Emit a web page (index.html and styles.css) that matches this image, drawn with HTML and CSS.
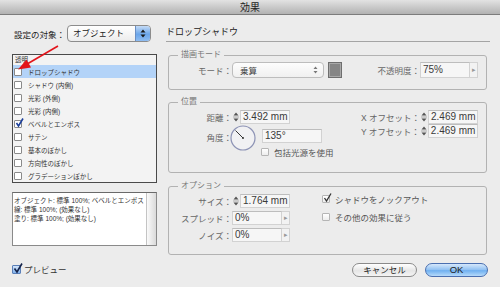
FILE: index.html
```html
<!DOCTYPE html>
<html lang="ja">
<head>
  <meta charset="UTF-8" />
  <title>効果</title>
  <link rel="stylesheet" href="styles.css">
</head>
<body>
  <div class="titlebar">効果</div>

  <div class="dialog">
    <div class="left">
      <div class="target-row">
        <span class="target-label">設定の対象：</span>
        <div class="popup">
          <span class="popup-text">オブジェクト</span>
          <span class="popup-cap">
            <svg width="6" height="9" viewBox="0 0 6 9"><path d="M0.5 3.5 L3 0.5 L5.5 3.5Z M0.5 5.5 L3 8.5 L5.5 5.5Z" fill="#1a1a1a"/></svg>
          </span>
        </div>
      </div>

      <div class="effect-list">
        <div class="list-head">透明</div>
        <div class="list-row selected"><span class="cb"></span>ドロップシャドウ</div>
        <div class="list-row"><span class="cb"></span>シャドウ (内側)</div>
        <div class="list-row"><span class="cb"></span>光彩 (外側)</div>
        <div class="list-row"><span class="cb"></span>光彩 (内側)</div>
        <div class="list-row"><span class="cb checked">
          <svg width="9" height="10" viewBox="0 0 9 10"><path d="M1.5 5 L3.5 8 L8 0.5" fill="none" stroke="#1c3f9a" stroke-width="1.6"/></svg>
        </span>ベベルとエンボス</div>
        <div class="list-row"><span class="cb"></span>サテン</div>
        <div class="list-row"><span class="cb"></span>基本のぼかし</div>
        <div class="list-row"><span class="cb"></span>方向性のぼかし</div>
        <div class="list-row"><span class="cb"></span>グラデーションぼかし</div>
      </div>

      <div class="summary">
        <div class="summary-text">
          <div>オブジェクト: 標準 100%; ベベルとエンボス</div>
          <div>線: 標準 100%; (効果なし)</div>
          <div>塗り: 標準 100%; (効果なし)</div>
        </div>
        <div class="scrollbar"></div>
      </div>

      <div class="preview">
        <span class="cb blue">
          <svg width="10" height="11" viewBox="0 0 10 11"><path d="M1.5 5.5 L4 9 L9 0.5" fill="none" stroke="#14234a" stroke-width="1.6"/></svg>
        </span>
        プレビュー
      </div>
    </div>

    <div class="right">
      <div class="section-title">ドロップシャドウ</div>

      <fieldset class="group group-mode">
        <legend>描画モード</legend>
        <div class="row">
          <span class="label">モード：</span>
          <div class="select">
            <span>乗算</span>
            <svg width="5" height="8" viewBox="0 0 5 8"><path d="M0.5 3 L2.5 0.5 L4.5 3Z M0.5 5 L2.5 7.5 L4.5 5Z" fill="#777"/></svg>
          </div>
          <span class="swatch"></span>
          <span class="label right-label">不透明度：</span>
          <span class="field">75%</span>
          <span class="field-arrow">▸</span>
        </div>
      </fieldset>

      <fieldset class="group group-pos">
        <legend>位置</legend>
        <div class="cols">
          <div class="col">
            <div class="row">
              <span class="label">距離：</span>
              <svg class="spin" width="8" height="14" viewBox="0 0 8 14"><path d="M1.5 5.5 L4 2.5 L6.5 5.5Z M1.5 8.5 L4 11.5 L6.5 8.5Z" fill="#555"/><path d="M1 7H7" stroke="#aaa"/></svg>
              <span class="field">3.492 mm</span>
            </div>
            <div class="angle-row">
              <span class="label angle-label">角度：</span>
              <svg class="dial" width="26" height="26" viewBox="0 0 26 26">
                <circle cx="13" cy="13" r="12" fill="#f1f1f3" stroke="#8d93b5" stroke-width="1.2"/>
                <path d="M13 13 L5.5 5.5" stroke="#333" stroke-width="1"/>
                <circle cx="13" cy="13" r="1" fill="#333"/>
              </svg>
              <div class="angle-side">
                <span class="field wide">135°</span>
                <div class="check-row">
                  <span class="cb plain"></span>
                  包括光源を使用
                </div>
              </div>
            </div>
          </div>
          <div class="col col-right">
            <div class="row">
              <span class="label">X オフセット：</span>
              <svg class="spin" width="8" height="14" viewBox="0 0 8 14"><path d="M1.5 5.5 L4 2.5 L6.5 5.5Z M1.5 8.5 L4 11.5 L6.5 8.5Z" fill="#555"/><path d="M1 7H7" stroke="#aaa"/></svg>
              <span class="field">2.469 mm</span>
            </div>
            <div class="row">
              <span class="label">Y オフセット：</span>
              <svg class="spin" width="8" height="14" viewBox="0 0 8 14"><path d="M1.5 5.5 L4 2.5 L6.5 5.5Z M1.5 8.5 L4 11.5 L6.5 8.5Z" fill="#555"/><path d="M1 7H7" stroke="#aaa"/></svg>
              <span class="field">2.469 mm</span>
            </div>
          </div>
        </div>
      </fieldset>

      <fieldset class="group group-opt">
        <legend>オプション</legend>
        <div class="cols">
          <div class="col stacked">
            <div class="row">
              <span class="label">サイズ：</span>
              <svg class="spin" width="8" height="14" viewBox="0 0 8 14"><path d="M1.5 5.5 L4 2.5 L6.5 5.5Z M1.5 8.5 L4 11.5 L6.5 8.5Z" fill="#555"/><path d="M1 7H7" stroke="#aaa"/></svg>
              <span class="field">1.764 mm</span>
            </div>
            <div class="row">
              <span class="label">スプレッド：</span>
              <span class="field">0%</span>
              <span class="field-arrow">▸</span>
            </div>
            <div class="row">
              <span class="label">ノイズ：</span>
              <span class="field">0%</span>
              <span class="field-arrow">▸</span>
            </div>
          </div>
          <div class="col checks">
            <div class="check-row">
              <span class="cb plain">
                <svg width="9" height="10" viewBox="0 0 9 10"><path d="M1.5 5 L3.5 8 L8 0.5" fill="none" stroke="#333" stroke-width="1.3"/></svg>
              </span>
              シャドウをノックアウト
            </div>
            <div class="check-row">
              <span class="cb plain"></span>
              その他の効果に従う
            </div>
          </div>
        </div>
      </fieldset>

      <div class="buttons">
        <button class="btn">キャンセル</button>
        <button class="btn ok">OK</button>
      </div>
    </div>
  </div>

  <svg class="pointer" width="70" height="80" viewBox="0 0 70 80">
    <path d="M58 46 L28 63.5" stroke="#e3141b" stroke-width="1.6"/>
    <polygon points="18,69.5 31,67.5 26.5,59.5" fill="#e3141b"/>
  </svg>
</body>
</html>
```

FILE: styles.css
```css
body {
  margin: 0;
  width: 500px;
  height: 287px;
  overflow: hidden;
  position: relative;
  background-color: #ececec;
  font-family: "Liberation Sans", "Noto Sans CJK JP", sans-serif;
  color: #333;
}

.titlebar {
  height: 14px;
  line-height: 15px;
  text-align: center;
  font-size: 10px;
  color: #222;
  background: linear-gradient(#e2e2e2, #b2b2b2);
  border-bottom: 1px solid #7c7c7c;
}

.dialog {
  display: flex;
  gap: 9px;
  padding: 9px 10px 0 12px;
}

/* left column */
.left {
  width: 145px;
  flex-shrink: 0;
}

.target-row {
  display: flex;
  align-items: center;
  height: 19px;
}

.target-label {
  font-size: 8.5px;
  color: #222;
  padding-left: 2px;
}

.popup {
  display: flex;
  align-items: stretch;
  width: 84px;
  height: 17px;
  box-sizing: border-box;
  margin-left: auto;
  margin-right: 6px;
  border: 1px solid #8c8c8c;
  border-radius: 4px;
  background: linear-gradient(#ffffff, #ececec);
  overflow: hidden;
}

.popup-text {
  flex: 1;
  font-size: 8.5px;
  line-height: 15px;
  padding-left: 5px;
  color: #222;
}

.popup-cap {
  width: 14px;
  display: flex;
  align-items: center;
  justify-content: center;
  background: linear-gradient(#c4dbf6, #6aa5ea 55%, #8fbdf2);
  border-left: 1px solid #6a8fc4;
}

.effect-list {
  margin-top: 11px;
  border: 1px solid #4a4a4a;
  background-color: #f3f3f3;
}

.list-head {
  height: 10px;
  line-height: 10px;
  font-size: 6.5px;
  padding-left: 2px;
  color: #333;
}

.list-row {
  display: flex;
  align-items: center;
  height: 13px;
  padding-left: 1px;
  font-size: 6.5px;
  color: #333;
}

.list-row.selected {
  background-color: #b3d3f8;
}

.cb {
  width: 8px;
  height: 8px;
  box-sizing: border-box;
  border: 1px solid #8a8a8a;
  border-radius: 1px;
  background-color: #fff;
  flex-shrink: 0;
  position: relative;
}

.cb svg {
  position: absolute;
  left: 0;
  top: -3px;
}

.list-row .cb {
  margin-right: 6px;
}

.summary {
  display: flex;
  margin-top: 9px;
  height: 54px;
  box-sizing: border-box;
  border: 1px solid #8a8a8a;
  border-top-color: #6a6a6a;
  background-color: #fff;
}

.summary-text {
  flex: 1;
  min-width: 0;
  white-space: nowrap;
  padding: 3px 0 0 1px;
  font-size: 6.5px;
  line-height: 9px;
  color: #333;
}

.scrollbar {
  width: 9px;
  flex-shrink: 0;
  border-left: 1px solid #c4c4c4;
  background: linear-gradient(90deg, #fafafa, #dadada);
}

.preview {
  display: flex;
  align-items: center;
  margin-top: 17px;
  font-size: 8.5px;
  color: #333;
}

.cb.blue {
  width: 9px;
  height: 9px;
  margin-right: 3px;
  border-color: #5a7fb8;
  background: linear-gradient(#d4e5fa, #7fb1ec);
}

/* right column */
.right {
  width: 324px;
}

.section-title {
  height: 17px;
  line-height: 17px;
  font-size: 9px;
  color: #222;
  border-bottom: 1px solid #a4a4a4;
}

.group {
  margin: 8px 3px 0 2px;
  padding: 2px 8px 11px 0;
  border: 1px solid #b2b2b2;
  border-radius: 3px;
  min-width: 0;
}

.group legend {
  font-size: 8px;
  line-height: 10px;
  padding: 0 3px;
  margin-left: 9px;
  color: #777;
}

.group-pos {
  margin-top: 7px;
  padding: 3px 8px 13px 0;
}

.group-opt {
  padding: 3px 8px 12px 0;
}

.row {
  display: flex;
  align-items: center;
  height: 14px;
}

.group-mode .row {
  height: 16px;
}

.label {
  width: 63px;
  flex-shrink: 0;
  text-align: right;
  font-size: 8.5px;
  color: #666;
  white-space: nowrap;
}

.right-label {
  margin-left: auto;
  width: auto;
}

.select {
  display: flex;
  align-items: center;
  justify-content: space-between;
  width: 92px;
  height: 16px;
  box-sizing: border-box;
  padding: 0 5px 0 7px;
  border: 1px solid #bdbdbd;
  border-radius: 4px;
  background: linear-gradient(#fdfdfd, #f0f0f0);
  font-size: 8.5px;
  color: #444;
}

.swatch {
  width: 14px;
  height: 16px;
  box-sizing: border-box;
  margin-left: 4px;
  border: 1px solid #6e6e6e;
  box-shadow: inset 0 0 0 1px #a8a8a8;
  background-color: #858585;
}

.field {
  width: 50px;
  height: 14px;
  box-sizing: border-box;
  padding-left: 2px;
  border: 1px solid #d2d2d2;
  border-top-color: #bdbdbd;
  background-color: #f6f6f6;
  font-size: 10px;
  line-height: 12px;
  color: #3a3a3a;
}

.group-mode .field {
  height: 16px;
  line-height: 14px;
}

.field.wide {
  width: 60px;
  display: block;
}

.field-arrow {
  width: 8px;
  height: 14px;
  box-sizing: border-box;
  border: 1px solid #d2d2d2;
  border-left: none;
  background-color: #f2f2f2;
  font-size: 7px;
  line-height: 12px;
  text-align: center;
  color: #999;
}

.group-mode .field-arrow {
  height: 16px;
  line-height: 14px;
}

.spin {
  display: block;
  flex-shrink: 0;
}

.cols {
  display: flex;
}

.col-right {
  margin-left: auto;
}

.col-right .label {
  width: auto;
}

.angle-row {
  display: flex;
  margin-top: 1px;
}

.angle-label {
  margin-top: 6px;
  line-height: 14px;
}

.dial {
  display: block;
  margin-left: -2px;
  margin-right: 6px;
}

.angle-side {
  margin-top: 4px;
}

.check-row {
  display: flex;
  align-items: center;
  height: 14px;
  font-size: 8.5px;
  color: #555;
}

.angle-side .check-row {
  margin-top: 2px;
  margin-left: -1px;
}

.cb.plain {
  width: 8px;
  height: 8px;
  margin-right: 5px;
  border-color: #b5b5b5;
  background: linear-gradient(#ffffff, #ededed);
}

.stacked {
  display: flex;
  flex-direction: column;
  gap: 3px;
}

.checks {
  margin-left: 32px;
  margin-top: -2px;
  display: flex;
  flex-direction: column;
  gap: 4px;
}

.buttons {
  display: flex;
  justify-content: flex-end;
  gap: 8px;
  margin-top: 8px;
  padding-right: 2px;
}

.btn {
  width: 65px;
  height: 14px;
  padding: 0;
  border: 1px solid #8a8a8a;
  border-radius: 7px;
  background: linear-gradient(#ffffff, #e6e6e6 55%, #f4f4f4);
  font-family: "Liberation Sans", "Noto Sans CJK JP", sans-serif;
  font-size: 8.5px;
  line-height: 12px;
  color: #222;
}

.btn.ok {
  width: 63px;
  font-size: 9.5px;
  border-color: #4a6fb0;
  background: linear-gradient(#d6e8fb, #8fc0f2 50%, #6fb0f0 55%, #b6dafa);
}

.pointer {
  position: absolute;
  left: 0;
  top: 0;
}
```
